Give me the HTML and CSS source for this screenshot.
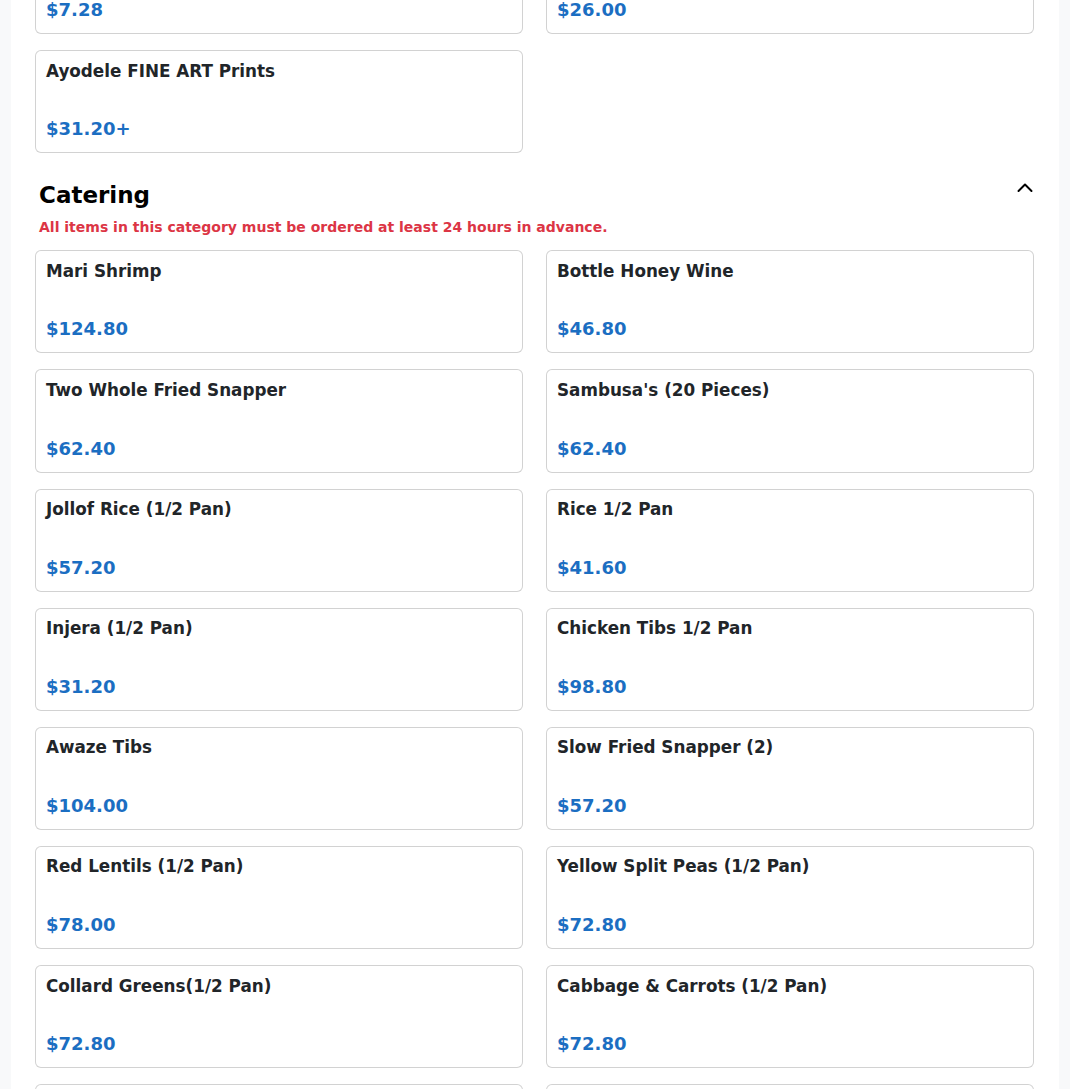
FILE: index.html
```html
<!DOCTYPE html>
<html lang="en">
<head>
<meta charset="utf-8">
<title>Menu</title>
<link rel="stylesheet" href="styles.css">
</head>
<body>
<main class="page">
  <section class="category">
    <div class="item-grid">
      <div class="item-card"><div class="item-name">&nbsp;</div><div class="item-price">$7.28</div></div>
      <div class="item-card"><div class="item-name">&nbsp;</div><div class="item-price">$26.00</div></div>
      <div class="item-card"><div class="item-name">Ayodele FINE ART Prints</div><div class="item-price">$31.20+</div></div>
    </div>
  </section>
  <section class="category">
    <div class="category-header">
      <h2 class="category-title">Catering</h2>
      <button class="collapse-btn" aria-label="Collapse">
        <svg width="16" height="16" viewBox="0 0 16 16"><polyline points="1.5,11 8,4.5 14.5,11" fill="none" stroke="#000" stroke-width="2" stroke-linecap="round" stroke-linejoin="round"/></svg>
      </button>
    </div>
    <p class="category-notice">All items in this category must be ordered at least 24 hours in advance.</p>
    <div class="item-grid">
      <div class="item-card"><div class="item-name">Mari Shrimp</div><div class="item-price">$124.80</div></div>
      <div class="item-card"><div class="item-name">Bottle Honey Wine</div><div class="item-price">$46.80</div></div>
      <div class="item-card"><div class="item-name">Two Whole Fried Snapper</div><div class="item-price">$62.40</div></div>
      <div class="item-card"><div class="item-name">Sambusa's (20 Pieces)</div><div class="item-price">$62.40</div></div>
      <div class="item-card"><div class="item-name">Jollof Rice (1/2 Pan)</div><div class="item-price">$57.20</div></div>
      <div class="item-card"><div class="item-name">Rice 1/2 Pan</div><div class="item-price">$41.60</div></div>
      <div class="item-card"><div class="item-name">Injera (1/2 Pan)</div><div class="item-price">$31.20</div></div>
      <div class="item-card"><div class="item-name">Chicken Tibs 1/2 Pan</div><div class="item-price">$98.80</div></div>
      <div class="item-card"><div class="item-name">Awaze Tibs</div><div class="item-price">$104.00</div></div>
      <div class="item-card"><div class="item-name">Slow Fried Snapper (2)</div><div class="item-price">$57.20</div></div>
      <div class="item-card"><div class="item-name">Red Lentils (1/2 Pan)</div><div class="item-price">$78.00</div></div>
      <div class="item-card"><div class="item-name">Yellow Split Peas (1/2 Pan)</div><div class="item-price">$72.80</div></div>
      <div class="item-card"><div class="item-name">Collard Greens(1/2 Pan)</div><div class="item-price">$72.80</div></div>
      <div class="item-card"><div class="item-name">Cabbage &amp; Carrots (1/2 Pan)</div><div class="item-price">$72.80</div></div>
      <div class="item-card"><div class="item-name">&nbsp;</div><div class="item-price">&nbsp;</div></div>
      <div class="item-card"><div class="item-name">&nbsp;</div><div class="item-price">&nbsp;</div></div>
    </div>
  </section>
</main>
<script src="script.js"></script>
</body>
</html>
```

FILE: styles.css
```css
html, body {
  margin: 0;
  padding: 0;
}
body {
  background: #f8f9fa;
  font-family: "DejaVu Sans", sans-serif;
  color: #212529;
}
.page {
  background: #ffffff;
  margin: 0 11px;
  padding: 16px 25px 40px 24px;
  min-height: 1400px;
}
.category + .category {
  margin-top: 28px;
}
.category-header {
  display: flex;
  justify-content: space-between;
  align-items: flex-start;
  padding: 0 1px 0 4px;
}
.category-title {
  margin: 0;
  font-size: 23px;
  line-height: 29px;
  font-weight: 700;
  color: #000;
}
.collapse-btn {
  border: 0;
  background: transparent;
  padding: 0;
  margin-top: -1px;
  width: 16px;
  height: 16px;
  display: flex;
  cursor: pointer;
}
.category-notice {
  margin: 7px 0 12px 4px;
  font-size: 14px;
  line-height: 21px;
  font-weight: 700;
  color: #dc3545;
}
.item-grid {
  display: grid;
  grid-template-columns: 488px 488px;
  column-gap: 23px;
  row-gap: 16px;
}
.item-card {
  border: 1px solid rgba(0, 0, 0, 0.175);
  border-radius: 6px;
  padding: 7.5px 10px 10px;
  background: #fff;
}
.item-name {
  font-size: 16.8px;
  line-height: 24px;
  font-weight: 700;
  margin-bottom: 32.64px;
}
.item-price {
  font-size: 18px;
  line-height: 27px;
  font-weight: 700;
  color: #1b6ec2;
}
```

FILE: script.js
```js
window.scrollTo(0, 85);
```
